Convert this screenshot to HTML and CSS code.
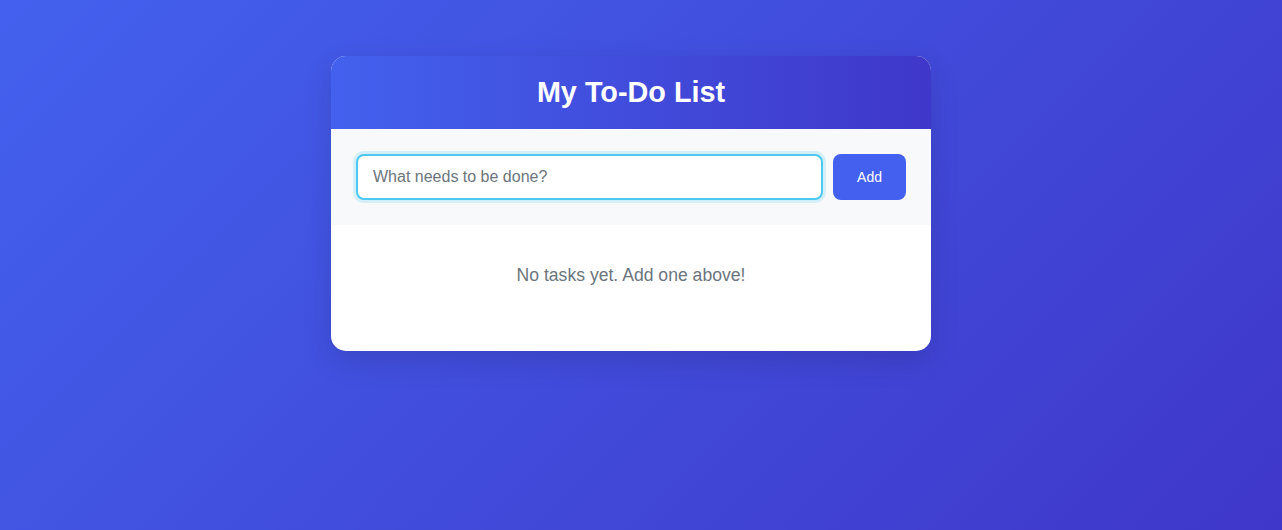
FILE: index.html
```html
<!DOCTYPE html>
<html lang="en">
<head>
<meta charset="utf-8">
<title>My To-Do List</title>
<link rel="stylesheet" href="styles.css">
</head>
<body>
<main class="page">
  <section class="card">
    <header class="card-header">
      <h1 class="title">My To-Do List</h1>
    </header>
    <form class="add-form" onsubmit="return false;">
      <input class="task-input" type="text" placeholder="What needs to be done?">
      <button class="add-btn" type="submit">Add</button>
    </form>
    <div class="task-list">
      <p class="empty">No tasks yet. Add one above!</p>
    </div>
  </section>
</main>
</body>
</html>
```
FILE: styles.css
```css
* { box-sizing: border-box; }
html, body { margin: 0; height: 100%; }
body {
  font-family: "Liberation Sans", Arial, sans-serif;
  background: linear-gradient(135deg, #4361ee 0%, #3f37c9 100%);
  min-height: 530px;
}
.page {
  display: flex;
  justify-content: center;
  padding: 56px 20px 0 0;
}
.card {
  width: 600px;
  background: #ffffff;
  border-radius: 15px;
  overflow: hidden;
  box-shadow: 0 10px 30px rgba(0, 0, 0, 0.12);
}
.card-header {
  background: linear-gradient(90deg, #4361ee 0%, #3f37c9 100%);
  padding: 20px;
  text-align: center;
}
.title {
  margin: 0;
  color: #ffffff;
  font-size: 28.8px;
  line-height: 33px;
  font-weight: 700;
}
.add-form {
  display: flex;
  gap: 10px;
  padding: 25px;
  background: #f8f9fa;
  margin: 0;
}
.task-input {
  flex: 1;
  padding: 12px 15px;
  font-family: inherit;
  font-size: 16px;
  line-height: 18px;
  border: 2px solid #4cc9f0;
  border-radius: 8px;
  outline: none;
  box-shadow: 0 0 0 3px rgba(76, 201, 240, 0.2);
  color: #333;
  background: #fff;
}
.task-input::placeholder { color: #6c757d; }
.add-btn {
  padding: 0 24px;
  background: #4361ee;
  color: #ffffff;
  border: none;
  border-radius: 8px;
  font-family: inherit;
  font-size: 14px;
  cursor: pointer;
}
.task-list {
  padding: 40px 20px 65px;
}
.empty {
  margin: 0;
  text-align: center;
  color: #6c757d;
  font-size: 17.6px;
  line-height: 21px;
}
```
